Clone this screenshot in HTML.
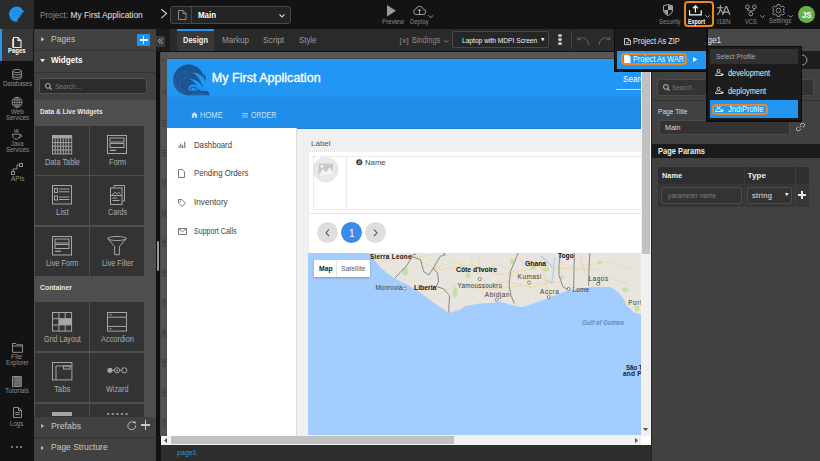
<!DOCTYPE html>
<html><head><meta charset="utf-8">
<style>
*{margin:0;padding:0;box-sizing:border-box}
html,body{width:820px;height:461px;overflow:hidden;background:#131313;font-family:"Liberation Sans",sans-serif}
.a{position:absolute}
.t{position:absolute;white-space:nowrap;line-height:1}
svg{position:absolute;overflow:visible}
.nv{font-size:6px;color:#8e8e8e;text-align:center;width:34px;left:0}

.tile{position:absolute;background:#333;width:54px;height:49px}
.ico{fill:none;stroke:#a6a6a6;stroke-width:1}
</style></head><body>
<!-- ============ TOP BAR ============ -->
<div class="a" style="left:0;top:0;width:820px;height:29px;background:#131313"></div>
<div class="a" style="left:0;top:0;width:34px;height:29px;background:#2b2b2b"></div>
<!-- logo -->
<svg style="left:0;top:0" width="34" height="28" viewBox="0 0 34 28"><path d="M24 12.2 A7.6 7.6 0 1 0 17.3 21.8 L17.8 18.4 L20.4 17.1 L19.6 15.8 L22.2 14.8 L21.2 12.9 Z" fill="#1e96f0"></path><path d="M11.5 13 C13.5 10.8 17.5 10.2 20.5 11.6 M12.5 16.2 C14 14.2 17 13.6 19.5 14.6" stroke="#1a78c8" stroke-width="0.6" fill="none"></path></svg>
<div class="t" style="font-size: 9px; color: rgb(138, 138, 138); left: 40px; top: 11px; transform: scaleX(0.925); transform-origin: left top;">Project: <span style="color:#e4e4e4">My First Application</span></div>
<svg style="left:161px;top:9px" width="6" height="10" viewBox="0 0 6 10"><path d="M0.3 0.3 L5.5 4.6 L0.3 9.1" stroke="#c8c8c8" stroke-width="1.2" fill="none"></path></svg>
<!-- page selector -->
<div class="a" style="left:170px;top:6px;width:121px;height:18px;border:1px solid #484848;border-radius:3px;background:#242424"></div>
<div class="a" style="left:191px;top:7px;width:1px;height:16px;background:#484848"></div>
<svg style="left:178px;top:10px" width="9" height="10" viewBox="0 0 9 10"><path d="M0.5 0.5 H5 L8 3.5 V9.5 H0.5 Z M5 0.5 V3.5 H8" stroke="#8e8e8e" stroke-width="1" fill="none"></path></svg>
<div class="t" style="font-size: 8.5px; font-weight: bold; color: rgb(255, 255, 255); left: 198px; top: 11px; transform: scaleX(0.9332); transform-origin: left top;">Main</div>
<svg style="left:279px;top:13.5px" width="6" height="4" viewBox="0 0 6 4"><path d="M0.4 0.4 L3 3 L5.6 0.4" stroke="#cfcfcf" stroke-width="1.1" fill="none"></path></svg>

<!-- preview / deploy -->
<svg style="left:387px;top:4.7px" width="9" height="12" viewBox="0 0 9 12"><path d="M0 0 L9 5.7 L0 11.4 Z" fill="#9a9a9a"></path></svg>
<div class="t" style="font-size: 6.5px; color: rgb(138, 138, 138); left: 381.7px; top: 19px; transform: scaleX(0.9522); transform-origin: left top;">Preview</div>
<svg style="left:413px;top:5px" width="13" height="10" viewBox="0 0 13 10"><path d="M3 9.5 H10 A2.6 2.6 0 0 0 10.3 4.3 A3.9 3.9 0 0 0 2.8 4 A2.8 2.8 0 0 0 3 9.5 Z M6.5 9.5 V4.3 M4.8 6 L6.5 4.3 L8.2 6" stroke="#9a9a9a" stroke-width="1" fill="none"></path></svg>
<svg style="left:428px;top:15px" width="6" height="3" viewBox="0 0 6 3"><path d="M0.3 0.3 L2.8 2.6 L5.3 0.3" stroke="#a0a0a0" stroke-width="0.9" fill="none"></path></svg>
<div class="t" style="font-size: 6.5px; color: rgb(138, 138, 138); left: 410px; top: 19px; transform: scaleX(0.9153); transform-origin: left top;">Deploy</div>

<!-- security -->
<svg style="left:663px;top:4.4px" width="10" height="12" viewBox="0 0 10 12">
  <path d="M5 0.5 L9.5 1.8 V6 C9.5 8.8 7.5 10.6 5 11.4 C2.5 10.6 0.5 8.8 0.5 6 V1.8 Z" fill="none" stroke="#a0a0a0" stroke-width="1"></path>
  <path d="M5 1 L9 2.2 V6 H5 Z" fill="#a0a0a0"></path><path d="M5 6 V10.9 C2.9 10.2 1 8.6 1 6 Z" fill="#a0a0a0"></path>
</svg>
<div class="t" style="font-size: 6.5px; color: rgb(138, 138, 138); left: 658.8px; top: 19px; transform: scaleX(0.9164); transform-origin: left top;">Security</div>
<!-- export -->
<div class="a" style="left:684.3px;top:1.1px;width:29.5px;height:25.6px;border:2px solid #f0861f;border-radius:4px"></div>
<svg style="left:689px;top:5px" width="13" height="11" viewBox="0 0 13 11">
  <path d="M0.6 5.2 V9.9 H12.2 V5.2" stroke="#fff" stroke-width="1.2" fill="none"></path>
  <path d="M6.4 7.6 V0.8 M3.9 3.2 L6.4 0.8 L8.9 3.2" stroke="#fff" stroke-width="1.2" fill="none"></path>
</svg>
<svg style="left:704.7px;top:15px" width="6" height="3" viewBox="0 0 6 3"><path d="M0.3 0.3 L2.5 2.3 L4.7 0.3" stroke="#bbb" stroke-width="0.9" fill="none"></path></svg>
<div class="t" style="font-size: 6.5px; color: rgb(255, 255, 255); font-weight: bold; left: 687.6px; top: 19px; transform: scaleX(0.8216); transform-origin: left top;">Export</div>
<!-- i18n -->
<svg style="left:716px;top:4px" width="15" height="12" viewBox="0 0 15 12"><path d="M1 3.7 H7.6 M4.4 1 V4 C4.2 7 3 9.2 1.2 10.6 M4.7 5.8 C5.3 7.3 6.2 8.3 7.4 9" stroke="#a8a8a8" stroke-width="1.1" fill="none"></path><path d="M6.6 11 L10 2.6 H10.6 L14 11 M7.8 8.2 H12.8" stroke="#a8a8a8" stroke-width="1.2" fill="none"></path></svg>
<div class="t" style="font-size: 6.5px; color: rgb(138, 138, 138); left: 717px; top: 19px; transform: scaleX(0.9844); transform-origin: left top;">I18N</div>
<!-- vcs -->
<svg style="left:745px;top:4px" width="12" height="13" viewBox="0 0 12 13">
  <circle cx="2.5" cy="2.9" r="1.9" fill="none" stroke="#a0a0a0" stroke-width="0.9"></circle>
  <circle cx="9.4" cy="2.9" r="1.9" fill="none" stroke="#a0a0a0" stroke-width="0.9"></circle>
  <circle cx="5.8" cy="9.9" r="1.9" fill="none" stroke="#a0a0a0" stroke-width="0.9"></circle>
  <path d="M2.5 4.8 V6 L5.8 7.2 M9.4 4.8 V6 L5.8 7.2 V8" stroke="#a0a0a0" stroke-width="0.9" fill="none"></path>
</svg>
<svg style="left:760px;top:14.6px" width="6" height="3" viewBox="0 0 6 3"><path d="M0.3 0.3 L2.5 2.6 L4.8 0.3" stroke="#a0a0a0" stroke-width="0.9" fill="none"></path></svg>
<div class="t" style="font-size: 6.5px; color: rgb(138, 138, 138); left: 745.3px; top: 19px; transform: scaleX(0.8837); transform-origin: left top;">VCS</div>
<!-- settings -->
<svg style="left:772px;top:3.7px" width="13" height="13" viewBox="-6.5 -6.5 13 13">
  <path d="M-1.2 -6 L1.2 -6 L1.6 -4.4 L3.1 -3.7 L4.5 -4.6 L6 -2.9 L5 -1.5 L5.4 0 L5 1.5 L6 2.9 L4.5 4.6 L3.1 3.7 L1.6 4.4 L1.2 6 L-1.2 6 L-1.6 4.4 L-3.1 3.7 L-4.5 4.6 L-6 2.9 L-5 1.5 L-5.4 0 L-5 -1.5 L-6 -2.9 L-4.5 -4.6 L-3.1 -3.7 L-1.6 -4.4 Z" fill="none" stroke="#9a9a9a" stroke-width="0.9" stroke-linejoin="round"></path>
  <circle cx="0" cy="0" r="2.3" fill="none" stroke="#9a9a9a" stroke-width="0.9"></circle>
</svg>
<svg style="left:787.5px;top:14.8px" width="6" height="3" viewBox="0 0 6 3"><path d="M0.3 0.3 L2.5 2.3 L4.8 0.3" stroke="#a0a0a0" stroke-width="0.9" fill="none"></path></svg>
<div class="t" style="font-size: 6.5px; color: rgb(138, 138, 138); left: 768.9px; top: 18px; transform: scaleX(0.954); transform-origin: left top;">Settings</div>
<div class="a" style="left:797.9px;top:6.4px;width:16.8px;height:16.8px;border-radius:50%;background:#6aaf4a"></div>
<div class="t" style="font-size: 8.5px; color: rgb(255, 255, 255); font-weight: bold; left: 801.9px; top: 11px; transform: scaleX(0.9206); transform-origin: left top;">JS</div>

<!-- ============ LEFT NAV ============ -->
<div class="a" style="left:0;top:29px;width:33.5px;height:432px;background:#131313"></div>
<div class="a" style="left:0;top:29px;width:33.4px;height:32px;background:#383838"></div>
<div class="a" style="left:0;top:29px;width:1.5px;height:32px;background:#2196f3"></div>
<svg style="left:12px;top:36.5px" width="10" height="11" viewBox="0 0 10 11"><path d="M1.5 0.5 H6 L9 3.5 V10.5 H1.5 Z M6 0.5 V3.5 H9" stroke="#e8e8e8" stroke-width="1.1" fill="none"></path><path d="M0.5 2 V10.5" stroke="#e8e8e8" stroke-width="0.8"></path></svg>
<div class="t" style="font-size: 6.5px; color: rgb(255, 255, 255); font-weight: bold; left: 8.3px; top: 48px; transform: scaleX(0.9146); transform-origin: left top;">Pages</div>

<svg style="left:12px;top:68.8px" width="10" height="11" viewBox="0 0 10 11"><ellipse cx="5" cy="2" rx="4.3" ry="1.6" fill="none" stroke="#9a9a9a" stroke-width="0.9"></ellipse><path d="M0.7 2 V9 C0.7 10.8 9.3 10.8 9.3 9 V2 M0.7 4.5 C0.7 6.3 9.3 6.3 9.3 4.5 M0.7 7 C0.7 8.8 9.3 8.8 9.3 7" fill="none" stroke="#9a9a9a" stroke-width="0.9"></path></svg>
<div class="t" style="font-size: 7px; color: rgb(142, 142, 142); left: 2.6px; top: 80px; transform: scaleX(0.8653); transform-origin: left top;">Databases</div>

<svg style="left:11px;top:97.3px" width="12" height="11" viewBox="0 0 12 11"><circle cx="6" cy="5.3" r="5" fill="none" stroke="#9a9a9a" stroke-width="0.9"></circle><path d="M6 0.3 V10.3 M1 5.3 H11 M1.8 2.8 H10.2 M1.8 7.8 H10.2 M6 0.3 C2.8 3 2.8 7.6 6 10.3 M6 0.3 C9.2 3 9.2 7.6 6 10.3" fill="none" stroke="#9a9a9a" stroke-width="0.7"></path></svg>
<div class="t" style="font-size: 7px; color: rgb(142, 142, 142); left: 11px; top: 108px; transform: scaleX(0.8935); transform-origin: left top;">Web</div>
<div class="t" style="font-size: 7px; color: rgb(142, 142, 142); left: 5.5px; top: 114px; transform: scaleX(0.859); transform-origin: left top;">Services</div>

<svg style="left:11px;top:128.5px" width="12" height="11" viewBox="0 0 12 11"><path d="M1.5 5.2 H9.2 C9.2 8.5 7.5 10.2 5.3 10.2 C3.1 10.2 1.5 8.5 1.5 5.2 Z M9.2 6 C11.4 6 11.4 8.3 8.6 8.3 M4 0.5 C3.3 1.5 4.7 2.3 4 3.5 M5.5 0.5 C4.8 1.5 6.2 2.3 5.5 3.5 M7 0.5 C6.3 1.5 7.7 2.3 7 3.5" fill="none" stroke="#9a9a9a" stroke-width="0.9"></path></svg>
<div class="t" style="font-size: 7px; color: rgb(142, 142, 142); left: 11px; top: 140px; transform: scaleX(0.8488); transform-origin: left top;">Java</div>
<div class="t" style="font-size: 7px; color: rgb(142, 142, 142); left: 5.8px; top: 146px; transform: scaleX(0.859); transform-origin: left top;">Services</div>

<svg style="left:11px;top:163px" width="12" height="12" viewBox="0 0 12 12"><rect x="0.5" y="8.5" width="3" height="3" fill="none" stroke="#9a9a9a" stroke-width="0.9"></rect><rect x="8.5" y="0.5" width="3" height="3" fill="none" stroke="#9a9a9a" stroke-width="0.9"></rect><path d="M2 8.5 V6 H6 V2 H8.5" fill="none" stroke="#9a9a9a" stroke-width="0.9"></path></svg>
<div class="t" style="font-size: 7px; color: rgb(142, 142, 142); left: 10.6px; top: 175px; transform: scaleX(0.9164); transform-origin: left top;">APIs</div>

<svg style="left:11.5px;top:342.8px" width="11" height="10" viewBox="0 0 11 10"><path d="M0.5 0.5 H4 L5 1.8 H10.5 V9.3 H0.5 Z M0.5 3 H10.5" fill="none" stroke="#9a9a9a" stroke-width="0.9"></path></svg>
<div class="t" style="font-size: 7px; color: rgb(142, 142, 142); left: 10.8px; top: 353px; transform: scaleX(0.9804); transform-origin: left top;">File</div>
<div class="t" style="font-size: 7px; color: rgb(142, 142, 142); left: 5.7px; top: 359px; transform: scaleX(0.8651); transform-origin: left top;">Explorer</div>
<svg style="left:12px;top:375.5px" width="10" height="11" viewBox="0 0 10 11"><path d="M0.5 0.5 H9.3 V10.5 H0.5 Z" fill="none" stroke="#9a9a9a" stroke-width="0.9"></path><path d="M2 0.5 V9.2 H9.3" fill="none" stroke="#9a9a9a" stroke-width="0.9"></path><rect x="2.5" y="1" width="6.5" height="7.8" fill="#6e6e6e"></rect></svg>
<div class="t" style="font-size: 7px; color: rgb(142, 142, 142); left: 5.1px; top: 387px; transform: scaleX(0.8972); transform-origin: left top;">Tutorials</div>
<svg style="left:12.5px;top:407px" width="9" height="11" viewBox="0 0 9 11"><path d="M0.5 0.5 H5.5 L8.5 3.5 V10.5 H0.5 Z M5.5 0.5 V3.5 H8.5 M2.2 5.5 H6.8 M2.2 7.5 H6.8" fill="none" stroke="#9a9a9a" stroke-width="0.9"></path></svg>
<div class="t" style="font-size: 7px; color: rgb(142, 142, 142); left: 10px; top: 420px; transform: scaleX(0.8731); transform-origin: left top;">Logs</div>
<div class="a" style="left:11px;top:445.5px;width:2.4px;height:2.4px;border-radius:50%;background:#9a9a9a"></div>
<div class="a" style="left:15.5px;top:445.5px;width:2.4px;height:2.4px;border-radius:50%;background:#9a9a9a"></div>
<div class="a" style="left:20px;top:445.5px;width:2.4px;height:2.4px;border-radius:50%;background:#9a9a9a"></div>


<!-- ============ LEFT PANEL ============ -->
<div class="a" style="left:33.5px;top:29px;width:122.5px;height:432px;background:#414141"></div>
<div class="a" style="left:33.5px;top:49.5px;width:122.5px;height:1px;background:#353535"></div>
<div class="a" style="left:33.5px;top:71.8px;width:122.5px;height:1px;background:#353535"></div>
<svg style="left:40.6px;top:37px" width="4" height="5" viewBox="0 0 4 5"><path d="M0 0 L3.5 2.2 L0 4.4 Z" fill="#b8b8b8"></path></svg>
<div class="t" style="font-size: 9.5px; color: rgb(196, 196, 196); left: 51.3px; top: 34px; transform: scaleX(0.8969); transform-origin: left top;">Pages</div>
<div class="a" style="left:137.2px;top:33.7px;width:12.8px;height:12.4px;background:#1e90f0"></div>
<div class="a" style="left:139.6px;top:39.4px;width:8px;height:1.2px;background:#fff"></div>
<div class="a" style="left:143px;top:36px;width:1.2px;height:8px;background:#fff"></div>
<svg style="left:40px;top:59.3px" width="5" height="4" viewBox="0 0 5 4"><path d="M0 0 L5 0 L2.5 3.2 Z" fill="#e8e8e8"></path></svg>
<div class="t" style="font-size: 9.5px; color: rgb(255, 255, 255); font-weight: bold; left: 51.3px; top: 55px; transform: scaleX(0.8535); transform-origin: left top;">Widgets</div>
<div class="a" style="left:39.4px;top:78.4px;width:107.6px;height:16px;background:#2c2c2c;border:1px solid #525252;border-radius:2px"></div>
<svg style="left:45px;top:83.2px" width="7" height="7" viewBox="0 0 7 7"><circle cx="2.9" cy="2.9" r="2.4" fill="none" stroke="#bdbdbd" stroke-width="1"></circle><path d="M4.7 4.7 L6.6 6.6" stroke="#bdbdbd" stroke-width="1.1"></path></svg>
<div class="t" style="font-size: 7.5px; color: rgb(122, 122, 122); left: 54.8px; top: 83px; transform: scaleX(0.8729); transform-origin: left top;">Search...</div>
<!-- widgets section -->
<div class="a" style="left:34px;top:99.5px;width:122px;height:317px;background:#4e4e4e"></div>
<div class="t" style="font-size: 8px; color: rgb(230, 230, 230); font-weight: bold; left: 40px; top: 108px; transform: scaleX(0.8152); transform-origin: left top;">Data &amp; Live Widgets</div>
<div class="tile" style="left:35px;top:126px"></div>
<div class="tile" style="left:90.3px;top:126px;width:53.7px"></div>
<div class="tile" style="left:35px;top:176.3px"></div>
<div class="tile" style="left:90.3px;top:176.3px;width:53.7px"></div>
<div class="tile" style="left:35px;top:227px;height:48.6px"></div>
<div class="tile" style="left:90.3px;top:227px;width:53.7px;height:48.6px"></div>
<div class="t" style="font-size: 8px; color: rgb(230, 230, 230); font-weight: bold; left: 40.4px; top: 284px; transform: scaleX(0.858); transform-origin: left top;">Container</div>
<div class="tile" style="left:35px;top:302.4px"></div>
<div class="tile" style="left:90.3px;top:302.4px;width:53.7px"></div>
<div class="tile" style="left:35px;top:353.1px"></div>
<div class="tile" style="left:90.3px;top:353.1px;width:53.7px"></div>
<div class="tile" style="left:35px;top:403.5px;height:14px"></div>
<div class="tile" style="left:90.3px;top:403.5px;width:53.7px;height:14px"></div>
<!-- tile icons -->
<svg style="left:51.8px;top:134.9px" width="20.2" height="19.4" viewBox="0 0 20.2 19.4">
  <rect x="0.5" y="0.5" width="19.2" height="18.4" class="ico"></rect>
  <rect x="0.5" y="0.5" width="19.2" height="3" fill="#a6a6a6"></rect>
  <path d="M3.2 3.5 V19 M5.9 3.5 V19 M8.6 3.5 V19 M11.3 3.5 V19 M14 3.5 V19 M16.7 3.5 V19 M0.5 7.6 H19.7 M0.5 11.3 H19.7 M0.5 15 H19.7" class="ico"></path>
</svg>
<svg style="left:107.1px;top:134.9px" width="20" height="19" viewBox="0 0 20 19">
  <rect x="0.5" y="0.5" width="19" height="18" class="ico"></rect>
  <rect x="3" y="3" width="14" height="4" class="ico"></rect><rect x="3" y="8.5" width="14" height="4" class="ico"></rect>
  <path d="M3 15.3 H9" stroke="#a6a6a6" stroke-width="1.3"></path>
</svg>
<div class="t" style="font-size: 9px; color: rgb(171, 171, 171); left: 44.9px; top: 158px; transform: scaleX(0.8145); transform-origin: left top;">Data Table</div>
<div class="t" style="font-size: 9px; color: rgb(171, 171, 171); left: 108.9px; top: 158px; transform: scaleX(0.8152); transform-origin: left top;">Form</div>
<svg style="left:51.8px;top:185.2px" width="20" height="19.5" viewBox="0 0 20 19.5">
  <rect x="0.5" y="0.5" width="19" height="18.5" class="ico"></rect>
  <rect x="2.5" y="3.5" width="3" height="4" class="ico"></rect><rect x="2.5" y="11" width="3" height="4" class="ico"></rect>
  <path d="M7 4 H17.5 M7 6.8 H17.5 M7 12 H17.5 M7 14.5 H17.5" class="ico"></path>
</svg>
<svg style="left:109.8px;top:184.9px" width="15" height="20" viewBox="0 0 15 20">
  <path d="M4 2.5 V0.5 H14.5 V16 H12" class="ico"></path>
  <rect x="0.5" y="3" width="11.5" height="16.5" class="ico"></rect>
  <path d="M2.2 10 L4.8 7.2 L6.8 9 L8.6 7.2 L10.5 9" class="ico"></path><path d="M0.5 10.5 H12" class="ico"></path>
  <path d="M2.5 13 H7 M2.5 15.5 H9.5" class="ico"></path>
</svg>
<div class="t" style="font-size: 9px; color: rgb(171, 171, 171); left: 55.9px; top: 208px; transform: scaleX(0.9076); transform-origin: left top;">List</div>
<div class="t" style="font-size: 9px; color: rgb(171, 171, 171); left: 107.8px; top: 208px; transform: scaleX(0.7961); transform-origin: left top;">Cards</div>
<svg style="left:51.8px;top:235.6px" width="20" height="19.5" viewBox="0 0 20 19.5">
  <rect x="0.5" y="0.5" width="19" height="18.5" class="ico"></rect>
  <rect x="3" y="3" width="14" height="4" class="ico"></rect><rect x="3" y="8.5" width="14" height="4" class="ico"></rect>
  <path d="M3 15.3 H9" stroke="#a6a6a6" stroke-width="1.3"></path>
</svg>
<svg style="left:107.1px;top:236px" width="20" height="19.2" viewBox="0 0 20 19.2">
  <ellipse cx="10" cy="2.5" rx="9.4" ry="2" class="ico"></ellipse>
  <path d="M0.6 2.5 L7.6 10.5 V18.7 H12.4 V10.5 L19.4 2.5" class="ico"></path>
</svg>
<div class="t" style="font-size: 9px; color: rgb(171, 171, 171); left: 46px; top: 259px; transform: scaleX(0.8102); transform-origin: left top;">Live Form</div>
<div class="t" style="font-size: 9px; color: rgb(171, 171, 171); left: 101.6px; top: 259px; transform: scaleX(0.8079); transform-origin: left top;">Live Filter</div>
<svg style="left:51.7px;top:311.6px" width="20.1" height="19.6" viewBox="0 0 20.1 19.6">
  <rect x="0.5" y="0.5" width="19.1" height="18.6" class="ico"></rect>
  <rect x="6.9" y="6.7" width="12.7" height="6.2" fill="#a6a6a6"></rect>
  <path d="M6.9 0.5 V19.1 M13.2 0.5 V6.7 M13.2 12.9 V19.1 M0.5 6.7 H6.9 M0.5 12.9 H6.9 M6.9 6.7 H19.6 M6.9 12.9 H19.6" class="ico"></path>
</svg>
<svg style="left:106.9px;top:311.6px" width="20" height="19.6" viewBox="0 0 20 19.6">
  <rect x="0.5" y="0.5" width="19" height="18.6" class="ico"></rect>
  <path d="M0.5 5.2 H19.5 M0.5 14.4 H19.5" class="ico"></path>
  <path d="M2.5 2.8 H4.5 M2.5 16.8 H4.5" stroke="#a6a6a6" stroke-width="1"></path>
</svg>
<div class="t" style="font-size: 9px; color: rgb(171, 171, 171); left: 43.9px; top: 335px; transform: scaleX(0.7913); transform-origin: left top;">Grid Layout</div>
<div class="t" style="font-size: 9px; color: rgb(171, 171, 171); left: 100.8px; top: 335px; transform: scaleX(0.8224); transform-origin: left top;">Accordion</div>
<svg style="left:51.7px;top:362.3px" width="20.4" height="18.4" viewBox="0 0 20.4 18.4">
  <rect x="0.5" y="0.5" width="19.4" height="17.4" class="ico"></rect>
  <path d="M4 17.9 V4 H19.9" class="ico"></path>
  <rect x="11.5" y="4" width="6.5" height="3" class="ico"></rect>
</svg>
<svg style="left:106.5px;top:367px" width="21" height="7" viewBox="0 0 21 7">
  <circle cx="3" cy="3.3" r="2.6" fill="#a6a6a6"></circle>
  <circle cx="10" cy="3.3" r="2.6" class="ico"></circle><circle cx="10" cy="3.3" r="0.9" fill="#a6a6a6"></circle>
  <circle cx="17.3" cy="3.3" r="2.6" class="ico"></circle>
  <path d="M5.6 3.3 H7.4 M12.6 3.3 H14.7" class="ico"></path>
</svg>
<div class="t" style="font-size: 9px; color: rgb(171, 171, 171); left: 54px; top: 385px; transform: scaleX(0.8582); transform-origin: left top;">Tabs</div>
<div class="t" style="font-size: 9px; color: rgb(171, 171, 171); left: 106.2px; top: 385px; transform: scaleX(0.8038); transform-origin: left top;">Wizard</div>
<div class="a" style="left:51.9px;top:412.2px;width:19.9px;height:3.4px;background:#a6a6a6"></div>
<svg style="left:106.8px;top:413px" width="21" height="2" viewBox="0 0 21 2"><path d="M0 1 H21" stroke="#a6a6a6" stroke-width="1.4" stroke-dasharray="2.4 2.2"></path></svg>
<!-- prefabs / page structure -->
<div class="a" style="left:33.5px;top:416.8px;width:122.5px;height:44.2px;background:#414141"></div>
<div class="a" style="left:33.5px;top:436.6px;width:122.5px;height:1px;background:#333"></div>
<svg style="left:40.6px;top:424.3px" width="4" height="5" viewBox="0 0 4 5"><path d="M0 0 L3.2 2 L0 4 Z" fill="#b8b8b8"></path></svg>
<div class="t" style="font-size: 9.5px; color: rgb(200, 200, 200); left: 51.3px; top: 421px; transform: scaleX(0.9209); transform-origin: left top;">Prefabs</div>
<svg style="left:127px;top:420.6px" width="10" height="10" viewBox="0 0 10 10"><path d="M8.6 4.6 A3.9 3.9 0 1 1 7.3 1.9" fill="none" stroke="#bdbdbd" stroke-width="1"></path><path d="M6 0.2 L8.8 0.6 L8.4 3.4 Z" fill="#bdbdbd"></path></svg>
<div class="a" style="left:141px;top:424.3px;width:9.4px;height:1.4px;background:#c8c8c8"></div>
<div class="a" style="left:145px;top:420.3px;width:1.4px;height:9.4px;background:#c8c8c8"></div>
<svg style="left:40.6px;top:445.7px" width="4" height="5" viewBox="0 0 4 5"><path d="M0 0 L3.2 2 L0 4 Z" fill="#b8b8b8"></path></svg>
<div class="t" style="font-size: 9.5px; color: rgb(200, 200, 200); left: 51.3px; top: 442px; transform: scaleX(0.894); transform-origin: left top;">Page Structure</div>
<!-- scroll strip -->
<div class="a" style="left:156px;top:29px;width:4px;height:432px;background:#0f0f0f"></div>
<div class="a" style="left:156.9px;top:240.8px;width:1.9px;height:30.2px;background:#9a9a9a;border-radius:1px"></div>


<!-- ============ CENTER ============ -->
<div class="a" style="left:160px;top:29px;width:491px;height:21.5px;background:#2a2a2a"></div>
<div class="a" style="left:156px;top:29px;width:14px;height:21.5px;background:#1c1c1c"></div>
<div class="a" style="left:176.5px;top:29px;width:37px;height:21.5px;background:#383838"></div>
<div class="a" style="left:176.5px;top:29px;width:37px;height:2px;background:#2196f3"></div>
<div class="t" style="font-size: 8.5px; color: rgb(240, 240, 240); font-weight: bold; left: 182.8px; top: 36px; transform: scaleX(0.8813); transform-origin: left top;">Design</div>
<div class="t" style="font-size: 8.5px; color: rgb(156, 156, 156); left: 222.1px; top: 36px; transform: scaleX(0.9484); transform-origin: left top;">Markup</div>
<div class="t" style="font-size: 8.5px; color: rgb(156, 156, 156); left: 263.3px; top: 36px; transform: scaleX(0.9745); transform-origin: left top;">Script</div>
<div class="t" style="font-size: 8.5px; color: rgb(156, 156, 156); left: 298.6px; top: 36px; transform: scaleX(0.9246); transform-origin: left top;">Style</div>
<div class="t" style="font-size: 8px; color: rgb(138, 138, 138); left: 399.6px; top: 37px; letter-spacing: 0.393px;">[x]</div>
<div class="t" style="font-size: 8.5px; color: rgb(138, 138, 138); left: 411.8px; top: 36px; transform: scaleX(0.8642); transform-origin: left top;">Bindings</div>
<svg style="left:443.5px;top:40px" width="5" height="3" viewBox="0 0 5 3"><path d="M0.3 0.3 L2.3 2.3 L4.3 0.3" stroke="#9a9a9a" stroke-width="0.9" fill="none"></path></svg>
<div class="a" style="left:452.2px;top:31.2px;width:96.4px;height:17.2px;border:1px solid #494949;border-radius:2px;background:#262626"></div>
<div class="t" style="font-size: 8px; color: rgb(242, 242, 242); left: 461.5px; top: 37px; transform: scaleX(0.8294); transform-origin: left top;">Laptop with MDPI Screen</div>
<svg style="left:541px;top:38px" width="4" height="4" viewBox="0 0 4 4"><path d="M0 0 H3.6 L1.8 3.4 Z" fill="#eee"></path></svg>
<div class="a" style="left:558.4px;top:33.9px;width:3.4px;height:3.4px;border-radius:50%;background:#c4c4c4"></div>
<div class="a" style="left:558.4px;top:37.8px;width:3.4px;height:3.4px;border-radius:50%;background:#c4c4c4"></div>
<div class="a" style="left:558.4px;top:41.8px;width:3.4px;height:3.4px;border-radius:50%;background:#c4c4c4"></div>
<div class="a" style="left:571.2px;top:31.2px;width:0.9px;height:17.6px;background:#454545"></div>
<svg style="left:577px;top:36px" width="13" height="10" viewBox="0 0 13 10"><path d="M11.6 9 C11.6 4.5 8.5 1.8 5 1.8 C3.6 1.8 2.4 2.3 1.3 3.2 M1 0.6 V3.6 H4" stroke="#5a5a5a" stroke-width="1.1" fill="none"></path></svg>
<svg style="left:597.8px;top:36px" width="13" height="10" viewBox="0 0 13 10"><path d="M1.2 9 C1.2 4.5 4.3 1.8 7.8 1.8 C9.2 1.8 10.4 2.3 11.5 3.2 M11.8 0.6 V3.6 H8.8" stroke="#5a5a5a" stroke-width="1.1" fill="none"></path></svg>
<div class="a" style="left:155.9px;top:35.6px;width:8.8px;height:11.4px;background:#3a3a3a"></div>
<svg style="left:157.8px;top:38.3px" width="5" height="6" viewBox="0 0 5 6"><path d="M2.3 0.3 L0.4 3 L2.3 5.7 M4.6 0.3 L2.7 3 L4.6 5.7" stroke="#b0b0b0" stroke-width="0.9" fill="none"></path></svg>
<!-- canvas surround -->
<div class="a" style="left:160px;top:50.5px;width:491px;height:1.5px;background:#111"></div>
<div class="a" style="left:160px;top:52px;width:481px;height:384px;background:#575757"></div>
<div class="a" style="left:159.8px;top:52px;width:7.4px;height:384px;background:#535353;border-left:1px solid #494949;border-right:1px solid #4d4d4d"></div>
<div class="a" style="left:167px;top:58.3px;width:474px;height:1px;background:#4a4643"></div>
<!-- ruler labels (vertical) -->
<div class="t" style="left:165.8px;top:59px;font-size:5px;color:#303030;transform:rotate(90deg);transform-origin:left top">0</div>
<div class="t" style="left:165.8px;top:89px;font-size:5px;color:#303030;transform:rotate(90deg);transform-origin:left top">50</div>
<div class="t" style="left:165.8px;top:119px;font-size:5px;color:#303030;transform:rotate(90deg);transform-origin:left top">100</div>
<div class="t" style="left:165.8px;top:149px;font-size:5px;color:#303030;transform:rotate(90deg);transform-origin:left top">150</div>
<div class="t" style="left:165.8px;top:179px;font-size:5px;color:#303030;transform:rotate(90deg);transform-origin:left top">200</div>
<div class="t" style="left:165.8px;top:209px;font-size:5px;color:#303030;transform:rotate(90deg);transform-origin:left top">250</div>
<div class="t" style="left:165.8px;top:239px;font-size:5px;color:#303030;transform:rotate(90deg);transform-origin:left top">300</div>
<div class="t" style="left:165.8px;top:269px;font-size:5px;color:#303030;transform:rotate(90deg);transform-origin:left top">350</div>
<div class="t" style="left:165.8px;top:299px;font-size:5px;color:#303030;transform:rotate(90deg);transform-origin:left top">400</div>
<div class="t" style="left:165.8px;top:329px;font-size:5px;color:#303030;transform:rotate(90deg);transform-origin:left top">450</div>
<div class="t" style="left:165.8px;top:359px;font-size:5px;color:#303030;transform:rotate(90deg);transform-origin:left top">500</div>
<div class="t" style="left:165.8px;top:389px;font-size:5px;color:#303030;transform:rotate(90deg);transform-origin:left top">550</div>
<div class="t" style="left:165.8px;top:419px;font-size:5px;color:#303030;transform:rotate(90deg);transform-origin:left top">600</div>
<!-- page -->
<div class="a" style="left:167px;top:59.2px;width:474px;height:376.4px;background:#eef0f2;overflow:hidden">
</div>
<div class="a" style="left:167px;top:59.2px;width:474px;height:38.5px;background:#2196f3"></div>
<div class="a" style="left:167px;top:95px;width:474px;height:33.6px;background:linear-gradient(#2196f3 0px,#1f8de7 5px,#1f8de7 32.6px,#1a80d6 33.6px)"></div>
<svg style="left:170.5px;top:63.5px" width="40" height="32" viewBox="0 0 40 32">
  <circle cx="17.6" cy="15.9" r="15.4" fill="#1b5593"></circle>
  <path d="M33 9.5 C34.6 12 35 14.5 34.4 17 L30 17 Z" fill="#1b5593"></path>
  <path d="M17 31.3 H38.7 C38.4 28.6 37.2 26.8 35 26.8 H17 Z" fill="#1b5593"></path>
  <path d="M21.5 8.6 C27.5 8.8 32.5 12.2 34.6 17.2 L36 17.2 L36 23 L31.2 21.6 C29.5 15.6 26 11.2 21.5 8.6 Z" fill="#2196f3"></path>
  <path d="M18.2 14.8 C24 15 28.6 18 30.6 21.8 L32 26 L27.4 25.6 C25.8 20.6 22.8 17 18.2 14.8 Z" fill="#2196f3"></path>
  <path d="M17.4 25.6 C17.2 22.6 19.4 20.4 22.2 20.4 C24.8 20.4 26.6 22.4 26.8 25 L25.2 26.8 H18.6 Z" fill="#2196f3"></path>
  <path d="M19.2 26.8 C19.2 24.4 20.6 23.2 22.4 23.2 C23.8 23.2 24.8 24.1 25 25.4" stroke="#1b5593" stroke-width="1.1" fill="none"></path>
  <path d="M14.8 30.6 C8.4 29.2 4.4 23.8 4.4 17.6 C4.4 11.4 9.4 7.4 16.4 8 M15.6 29.6 C10.8 28.2 8.4 24.4 8.4 20.4 C8.4 16 12 13 17.4 13.8" stroke="#2a73ba" stroke-width="0.55" fill="none"></path>
  <path d="M21 29.2 H34 M24 30.4 H36" stroke="#2a6fb5" stroke-width="0.5" fill="none"></path>
</svg>
<div class="t" style="font-size: 12.5px; color: rgb(255, 255, 255); -webkit-text-stroke: 0.35px rgb(255, 255, 255); left: 211.8px; top: 72px; letter-spacing: 0.022px;">My First Application</div>
<svg style="left:190.5px;top:111.6px" width="7" height="6" viewBox="0 0 7 6"><path d="M3.5 0 L7 3 H6 V6 H4.2 V4.2 H2.8 V6 H1 V3 H0 Z" fill="#c4def8"></path></svg>
<div class="t" style="font-size: 8.5px; color: rgb(201, 225, 250); left: 200px; top: 111px; transform: scaleX(0.8894); transform-origin: left top;">HOME</div>
<svg style="left:242px;top:112.6px" width="6" height="5" viewBox="0 0 6 5"><path d="M0 0.5 H6 M0 2.3 H6 M0 4.1 H6" stroke="#a9cff5" stroke-width="0.8"></path></svg>
<div class="t" style="font-size: 8.5px; color: rgb(201, 225, 250); left: 251px; top: 111px; transform: scaleX(0.8266); transform-origin: left top;">ORDER</div>
<div class="a" style="left:600px;top:59.2px;width:41px;height:38px;overflow:hidden"><div class="t" style="font-size: 8.5px; color: rgb(255, 255, 255); left: 23.1px; top: 16px; transform: scaleX(0.9533); transform-origin: left top;">Search</div></div>
<div class="a" style="left:616px;top:88.8px;width:25px;height:0.9px;background:#bcdcfa"></div>
<!-- left nav -->
<div class="a" style="left:167px;top:128.4px;width:128.5px;height:307.2px;background:#fff"></div>
<div class="a" style="left:295.5px;top:128.4px;width:1px;height:307.2px;background:#d9dcdf"></div>
<svg style="left:178px;top:141px" width="8" height="7" viewBox="0 0 8 7"><path d="M0.3 6.6 H7.8" stroke="#8a8a8a" stroke-width="0.7"></path><path d="M1 6.3 V4.6 M2.8 6.3 V2.6 M4.6 6.3 V4 M6.8 6.3 V0.8" stroke="#5e5e5e" stroke-width="1" fill="none"></path></svg>
<div class="t" style="font-size: 9px; color: rgb(66, 66, 66); left: 193.6px; top: 141px; transform: scaleX(0.8635); transform-origin: left top;">Dashboard</div>
<svg style="left:178.3px;top:169.3px" width="7" height="9" viewBox="0 0 7 9"><path d="M0.5 0.5 H4.3 L6.5 2.7 V8.5 H0.5 Z" stroke="#6a6a6a" stroke-width="0.9" fill="none"></path></svg>
<div class="t" style="font-size: 9px; color: rgb(66, 66, 66); left: 193.6px; top: 169px; transform: scaleX(0.8632); transform-origin: left top;">Pending Orders</div>
<svg style="left:178px;top:198.5px" width="8" height="8" viewBox="0 0 8 8"><path d="M0.5 0.5 H3.8 L7.5 4.2 L4.2 7.5 L0.5 3.8 Z" stroke="#6a6a6a" stroke-width="0.9" fill="none"></path><circle cx="2.3" cy="2.3" r="0.7" fill="#6a6a6a"></circle></svg>
<div class="t" style="font-size: 9px; color: rgb(66, 66, 66); left: 193.6px; top: 198px; transform: scaleX(0.9106); transform-origin: left top;">Inventory</div>
<svg style="left:177.5px;top:228px" width="9" height="7" viewBox="0 0 9 7"><path d="M0.5 0.5 H8.5 V6.5 H0.5 Z M0.5 0.8 L4.5 3.8 L8.5 0.8" stroke="#6a6a6a" stroke-width="0.9" fill="none"></path></svg>
<div class="t" style="font-size: 9px; color: rgb(66, 66, 66); left: 193.6px; top: 227px; transform: scaleX(0.787); transform-origin: left top;">Support Calls</div>
<!-- content -->
<div class="t" style="font-size: 8px; color: rgb(85, 85, 85); left: 311.4px; top: 140px; transform: scaleX(0.9981); transform-origin: left top;">Label</div>
<div class="a" style="left:308.3px;top:151.2px;width:332.7px;height:102.2px;background:#fff;border:1px dotted #dcdcdc;border-right:none;border-bottom:none"></div>
<div class="a" style="left:312.5px;top:155.5px;width:328.5px;height:54.2px;border:1px dotted #d6d6d6;border-right:none"></div>
<div class="a" style="left:345.8px;top:155.5px;width:0;height:54.2px;border-left:1px dotted #d6d6d6"></div>
<div class="a" style="left:308.5px;top:213.2px;width:332.5px;height:1px;background:#e6e6e6"></div>
<svg style="left:313.3px;top:156.6px" width="26" height="26" viewBox="0 0 26 26">
  <circle cx="12.7" cy="12.7" r="12.2" fill="#e9e9e9" stroke="#dcdcdc" stroke-width="0.8"></circle>
  <path d="M5.5 6.5 H20 V17 L5.5 19.5 Z" fill="#c9c9c9"></path>
  <path d="M5.5 19.5 L10 12 L13 15.5 L16.5 10.5 L20 15 V17 Z" fill="#f4f4f4"></path>
  <circle cx="9" cy="9.5" r="1.4" fill="#f4f4f4"></circle>
</svg>
<svg style="left:356.3px;top:159.3px" width="7" height="7" viewBox="0 0 7 7"><circle cx="3.3" cy="3.3" r="3" fill="#333"></circle><path d="M1.7 5 L5 1.6 M2.2 3 L3.5 1.8 M3.4 5 L5 3.5" stroke="#fff" stroke-width="0.8"></path></svg>
<div class="t" style="font-size: 8px; color: rgb(68, 68, 68); left: 364.7px; top: 159px; transform: scaleX(0.967); transform-origin: left top;">Name</div>
<div class="a" style="left:317px;top:222.4px;width:20.8px;height:20.8px;border-radius:50%;background:#dedede"></div>
<svg style="left:324.5px;top:229.2px" width="5" height="8" viewBox="0 0 5 8"><path d="M4 0.5 L1 3.8 L4 7.1" stroke="#555" stroke-width="1.1" fill="none"></path></svg>
<div class="a" style="left:341px;top:222.4px;width:20.8px;height:20.8px;border-radius:50%;background:#3b8beb"></div>
<div class="t" style="font-size: 10px; color: rgb(255, 255, 255); left: 349px; top: 229px; letter-spacing: 0.037px;">1</div>
<div class="a" style="left:365px;top:222.4px;width:20.8px;height:20.8px;border-radius:50%;background:#dedede"></div>
<svg style="left:373px;top:229.2px" width="5" height="8" viewBox="0 0 5 8"><path d="M1 0.5 L4 3.8 L1 7.1" stroke="#555" stroke-width="1.1" fill="none"></path></svg>
<div class="a" style="left:308px;top:253.4px;width:333px;height:182px;overflow:hidden">
<svg style="left:0;top:0" width="333" height="182" viewBox="0 0 333 182">
<rect x="0" y="0" width="333" height="182" fill="#a3ccff"></rect>
<polygon points="61.5,0.0 64.4,3.1 67.5,8.6 72.5,14.6 79.0,20.1 87.0,25.6 100.7,32.6 111.8,39.3 120.0,45.6 128.0,51.2 140.8,60.1 152.7,56.4 157.6,53.1 171.5,50.4 183.2,50.0 192.0,48.8 202.0,51.6 214.0,54.3 227.0,50.1 239.6,45.4 250.0,41.6 260.0,37.6 272.0,35.6 285.6,33.9 301.0,33.9 307.0,36.6 311.3,40.6 316.0,46.6 319.0,53.1 326.6,60.1 333.0,61.3 333.0,0.0" fill="#e7e5dd"></polygon>
<ellipse cx="97.0" cy="18.6" rx="3" ry="4" fill="#c5dfa6"></ellipse>
<ellipse cx="160.0" cy="22.6" rx="2.5" ry="3" fill="#c5dfa6"></ellipse>
<ellipse cx="147.0" cy="39.6" rx="2.5" ry="5" fill="#c5dfa6"></ellipse>
<ellipse cx="225.0" cy="14.6" rx="3" ry="2.5" fill="#c5dfa6"></ellipse>
<ellipse cx="204.0" cy="8.6" rx="2" ry="3" fill="#c5dfa6"></ellipse>
<ellipse cx="292.0" cy="9.6" rx="2.5" ry="2" fill="#c5dfa6"></ellipse>
<ellipse cx="317.0" cy="36.6" rx="3" ry="2" fill="#c5dfa6"></ellipse>
<ellipse cx="329.0" cy="55.6" rx="2.5" ry="3" fill="#c5dfa6"></ellipse>
<ellipse cx="254.0" cy="24.6" rx="2" ry="2" fill="#c5dfa6"></ellipse>
<path d="M232.4 2.6 L242.6 11.8 L245.6 16.9 L244.6 25.1 L243.6 30.6 M246.7 4.6 L245.6 14.6 M237.5 27.1 L243.6 30.2" stroke="#a9cff7" stroke-width="1.3" fill="none" stroke-linejoin="round"></path>
<path d="M112.0 8.6 L132.0 16.6 L162.0 11.6 L192.0 21.6 L232.0 14.6 L292.0 16.6" stroke="#efd39c" stroke-width="0.7" fill="none"></path>
<path d="M122.0 46.6 L152.0 29.6 L182.0 36.6 L222.0 31.6 L252.0 28.6" stroke="#efd39c" stroke-width="0.7" fill="none"></path>
<path d="M72.0 8.6 L92.0 4.6 L122.0 2.6" stroke="#efd39c" stroke-width="0.7" fill="none"></path>
<path d="M162.0 4.6 L172.0 26.6 L177.0 46.6" stroke="#efd39c" stroke-width="0.7" fill="none"></path>
<path d="M232.0 4.6 L237.0 26.6 L240.0 43.6" stroke="#efd39c" stroke-width="0.7" fill="none"></path>
<ellipse cx="238" cy="16.599999999999994" rx="3" ry="2" fill="#c5dfa6"></ellipse>
<path d="M122.0 16.6 L147.0 8.6 L167.0 18.6 L192.0 11.6 L212.0 21.6" stroke="#efd39c" stroke-width="0.7" fill="none"></path>
<path d="M162.0 36.6 L182.0 31.6 L202.0 28.6 L222.0 34.6 L237.0 31.6" stroke="#efd39c" stroke-width="0.7" fill="none"></path>
<path d="M252.0 8.6 L267.0 16.6 L282.0 11.6 L302.0 8.6 L327.0 16.6" stroke="#efd39c" stroke-width="0.7" fill="none"></path>
<path d="M292.0 21.6 L307.0 26.6 L322.0 31.6" stroke="#efd39c" stroke-width="0.7" fill="none"></path>
<path d="M212.0 4.6 L217.0 16.6 L222.0 36.6" stroke="#efd39c" stroke-width="0.7" fill="none"></path>
<path d="M272.0 1.6 L277.0 21.6" stroke="#efd39c" stroke-width="0.7" fill="none"></path>
<path d="M172.0 1.6 L170.0 16.6 L182.0 38.6" stroke="#efd39c" stroke-width="0.7" fill="none"></path>
<path d="M87.0 25.1 L92.0 19.6 L98.0 13.6 L101.0 8.6 L103.2 6.0 L103.2 3.4 L106.0 1.1 L108.0 1.6" stroke="#7d7d7d" stroke-width="0.9" fill="none" stroke-linejoin="round"></path>
<path d="M103.2 3.4 L112.6 6.6 L114.0 12.6 L116.0 18.8 L121.0 21.9 L125.4 15.0 L129.7 20.6 L130.5 29.0 L128.0 33.3 L135.7 35.9 L141.6 42.6 L141.0 51.6 L140.8 59.8" stroke="#7d7d7d" stroke-width="0.9" fill="none" stroke-linejoin="round"></path>
<path d="M125.4 15.0 L129.0 8.6 L132.2 3.4 L137.4 1.6 L135.0 0.0" stroke="#7d7d7d" stroke-width="0.9" fill="none" stroke-linejoin="round"></path>
<path d="M210.1 0.0 L206.3 9.6 L202.4 18.5 L201.1 32.6 L203.0 42.6 L206.3 50.5" stroke="#7d7d7d" stroke-width="0.9" fill="none" stroke-linejoin="round"></path>
<path d="M252.4 0.0 L251.0 11.6 L251.0 22.3 L254.9 33.9 L260.0 36.4" stroke="#7d7d7d" stroke-width="0.9" fill="none" stroke-linejoin="round"></path>
<path d="M266.4 0.0 L266.0 16.6 L265.7 35.1" stroke="#7d7d7d" stroke-width="0.9" fill="none" stroke-linejoin="round"></path>
<path d="M281.8 0.0 L281.0 16.6 L280.5 32.6" stroke="#7d7d7d" stroke-width="0.9" fill="none" stroke-linejoin="round"></path>
<circle cx="171.7" cy="26.2" r="1.5" fill="#fff" stroke="#555" stroke-width="0.7"></circle>
<circle cx="188.8" cy="46.6" r="1.5" fill="#fff" stroke="#555" stroke-width="0.7"></circle>
<circle cx="221.1" cy="29.5" r="1.5" fill="#fff" stroke="#555" stroke-width="0.7"></circle>
<circle cx="240.8" cy="44.1" r="1.5" fill="#fff" stroke="#555" stroke-width="0.7"></circle>
<circle cx="260.6" cy="35.9" r="1.5" fill="#fff" stroke="#555" stroke-width="0.7"></circle>
<circle cx="290.3" cy="30.8" r="1.5" fill="#fff" stroke="#555" stroke-width="0.7"></circle>
<circle cx="96.7" cy="35.5" r="1.5" fill="#fff" stroke="#555" stroke-width="0.7"></circle>
</svg>
<div class="t" style="font-size: 6.3px; color: rgb(17, 17, 17); font-style: normal; font-weight: bold; left: 62px; top: 1px; letter-spacing: 0.304px;">Sierra Leone</div>
<div class="t" style="font-size: 7px; color: rgb(17, 17, 17); font-style: normal; font-weight: bold; left: 147.5px; top: 13px; transform: scaleX(0.9747); transform-origin: left top;">Côte d'Ivoire</div>
<div class="t" style="font-size: 6.3px; color: rgb(58, 58, 58); font-style: normal; left: 67.4px; top: 32px; letter-spacing: 0.143px;">Monrovia</div>
<div class="t" style="font-size: 7px; color: rgb(17, 17, 17); font-style: normal; font-weight: bold; left: 105.8px; top: 31px; transform: scaleX(0.9742); transform-origin: left top;">Liberia</div>
<div class="t" style="font-size: 6.3px; color: rgb(58, 58, 58); font-style: normal; left: 149.5px; top: 30px; letter-spacing: 0.269px;">Yamoussoukro</div>
<div class="t" style="font-size: 6.5px; color: rgb(58, 58, 58); font-style: normal; left: 176.8px; top: 39px; letter-spacing: 0.505px;">Abidjan</div>
<div class="t" style="font-size: 6.8px; color: rgb(17, 17, 17); font-style: normal; font-weight: bold; left: 216.5px; top: 8px; transform: scaleX(0.9947); transform-origin: left top;">Ghana</div>
<div class="t" style="font-size: 6.5px; color: rgb(58, 58, 58); font-style: normal; left: 209.6px; top: 21px; letter-spacing: 0.446px;">Kumasi</div>
<div class="t" style="font-size: 6.5px; color: rgb(58, 58, 58); font-style: normal; left: 232px; top: 36px; letter-spacing: 0.549px;">Accra</div>
<div class="t" style="font-size: 6.8px; color: rgb(17, 17, 17); font-style: normal; font-weight: bold; left: 249.8px; top: 0px; transform: scaleX(0.9773); transform-origin: left top;">Togo</div>
<div class="t" style="font-size: 6.5px; color: rgb(58, 58, 58); font-style: normal; left: 264.5px; top: 34px; letter-spacing: 0.085px;">Lome</div>
<div class="t" style="font-size: 6.5px; color: rgb(58, 58, 58); font-style: normal; left: 280.5px; top: 23px; letter-spacing: 0.5px;">Lagos</div>
<div class="t" style="font-size: 6.5px; color: rgb(58, 58, 58); font-style: normal; left: 320.2px; top: 47px; letter-spacing: 0.533px;">Port</div>
<div class="t" style="font-size: 6.5px; color: rgb(95, 139, 200); font-style: italic; font-weight: bold; left: 274px; top: 67px; transform: scaleX(0.9272); transform-origin: left top;">Gulf of Guinea</div>
<div class="t" style="font-size: 6.5px; color: rgb(34, 34, 34); font-style: normal; font-weight: bold; left: 318.4px; top: 112px; transform: scaleX(0.9332); transform-origin: left top;">São T</div>
<div class="t" style="font-size: 6.5px; color: rgb(34, 34, 34); font-style: normal; font-weight: bold; left: 315px; top: 118px; letter-spacing: 0.204px;">and P</div>
<div class="a" style="left:5.7px;top:6.5px;width:56.2px;height:17.2px;background:#fff;box-shadow:0 1px 2px rgba(0,0,0,.25)"></div>
<div class="a" style="left:27.7px;top:6.5px;width:1px;height:17.2px;background:#e6e6e6"></div>
<div class="t" style="font-size: 7px; color: rgb(34, 34, 34); font-weight: bold; left: 10.5px; top: 12px; transform: scaleX(0.9686); transform-origin: left top;">Map</div>
<div class="t" style="font-size: 7px; color: rgb(90, 90, 90); left: 33.3px; top: 12px; transform: scaleX(0.9781); transform-origin: left top;">Satellite</div>
</div>

<!-- scrollbars -->
<div class="a" style="left:641px;top:51.8px;width:9.5px;height:383.8px;background:#f1f1f1"></div>
<div class="a" style="left:642px;top:59px;width:7.5px;height:194.5px;background:#c1c1c1"></div>
<svg style="left:643.3px;top:427.5px" width="5" height="4" viewBox="0 0 5 4"><path d="M0 0 H5 L2.5 3 Z" fill="#505050"></path></svg>
<div class="a" style="left:160.5px;top:435.6px;width:490px;height:9.6px;background:#f1f1f1"></div>
<div class="a" style="left:170.8px;top:436px;width:283.2px;height:8px;background:#c1c1c1"></div>
<svg style="left:163.5px;top:438px" width="4" height="5" viewBox="0 0 4 5"><path d="M3 0 V5 L0 2.5 Z" fill="#505050"></path></svg>
<svg style="left:634.5px;top:438px" width="4" height="5" viewBox="0 0 4 5"><path d="M0 0 V5 L3 2.5 Z" fill="#505050"></path></svg>
<div class="a" style="left:641px;top:435.6px;width:9.5px;height:9.6px;background:#fff"></div>
<!-- page tab bar -->
<div class="a" style="left:156px;top:445.2px;width:495px;height:15.8px;background:#2d2d2d"></div>
<div class="a" style="left:156px;top:435.6px;width:4.5px;height:25.4px;background:#121212"></div>
<div class="t" style="font-size: 8px; color: rgb(47, 143, 230); left: 176.8px; top: 449px; transform: scaleX(0.8917); transform-origin: left top;">page1</div>


<!-- ============ RIGHT PANEL ============ -->
<div class="a" style="left:650.5px;top:29px;width:169.5px;height:432px;background:#414141"></div>
<div class="a" style="left:650.5px;top:29px;width:1px;height:432px;background:#262626"></div>
<div class="a" style="left:651.5px;top:29px;width:168.5px;height:21.9px;background:#474747"></div>
<div class="t" style="font-size: 9px; color: rgb(224, 224, 224); left: 696.5px; top: 36px; transform: scaleX(0.9304); transform-origin: left top;">Page1</div>
<div class="a" style="left:651.5px;top:50.9px;width:168.5px;height:18.4px;background:#1d1d1d"></div>
<svg style="left:796px;top:54px" width="12" height="12" viewBox="0 0 12 12"><circle cx="6" cy="6" r="5" fill="none" stroke="#9a9a9a" stroke-width="1"></circle></svg>
<div class="a" style="left:656.8px;top:78.5px;width:157.2px;height:17.2px;background:#333;border:1px solid #4b4b4b;border-radius:3px"></div>
<svg style="left:662.8px;top:83.7px" width="7" height="7" viewBox="0 0 7 7"><circle cx="2.9" cy="2.9" r="2.4" fill="none" stroke="#c0c0c0" stroke-width="1"></circle><path d="M4.7 4.7 L6.6 6.6" stroke="#c0c0c0" stroke-width="1.1"></path></svg>
<div class="t" style="font-size: 7.5px; color: rgb(119, 119, 119); left: 672.4px; top: 84px; transform: scaleX(0.8396); transform-origin: left top;">Search...</div>
<div class="a" style="left:651.5px;top:99.8px;width:168.5px;height:1px;background:#333"></div>
<div class="t" style="font-size: 8px; color: rgb(222, 222, 222); left: 658px; top: 108px; transform: scaleX(0.8275); transform-origin: left top;">Page Title</div>
<div class="a" style="left:658.9px;top:119.8px;width:131.1px;height:15.5px;background:#333;border:1px solid #4b4b4b;border-radius:2px"></div>
<div class="t" style="font-size: 8px; color: rgb(222, 222, 222); left: 664.5px; top: 124px; transform: scaleX(0.8902); transform-origin: left top;">Main</div>
<svg style="left:796px;top:123.4px" width="9" height="8" viewBox="0 0 9 8"><path d="M3.6 4.6 L5.4 2.8 M4.2 1.8 L5.5 0.7 C6.4 0 7.6 0.1 8.2 0.8 C8.8 1.5 8.8 2.6 8 3.3 L6.8 4.4 M4.8 6.1 L3.5 7.3 C2.6 8 1.4 7.9 0.8 7.2 C0.2 6.5 0.2 5.4 1 4.7 L2.2 3.6" fill="none" stroke="#c8c8c8" stroke-width="1"></path></svg>
<div class="a" style="left:651.5px;top:143.7px;width:168.5px;height:14.7px;background:#1b1b1b"></div>
<div class="t" style="font-size: 8.5px; color: rgb(237, 237, 237); font-weight: bold; left: 658px; top: 147px; transform: scaleX(0.8797); transform-origin: left top;">Page Params</div>
<div class="a" style="left:658px;top:166.7px;width:150.6px;height:40px;background:#363636"></div>
<div class="a" style="left:658px;top:166.7px;width:150.6px;height:16.9px;background:#2f2f2f"></div>
<div class="a" style="left:744.3px;top:166.7px;width:1px;height:40px;background:#3a3a3a"></div>
<div class="a" style="left:795.4px;top:166.7px;width:1px;height:40px;background:#3f3f3f"></div>
<div class="t" style="font-size: 8px; color: rgb(240, 240, 240); font-weight: bold; left: 661.8px; top: 172px; transform: scaleX(0.9194); transform-origin: left top;">Name</div>
<div class="t" style="font-size: 8px; color: rgb(240, 240, 240); font-weight: bold; left: 747.5px; top: 172px; letter-spacing: 0.154px;">Type</div>
<div class="a" style="left:661.3px;top:186.5px;width:80.3px;height:17.3px;background:#333;border:1px solid #4d4d4d;border-radius:3px"></div>
<div class="t" style="font-size: 7px; color: rgb(124, 124, 124); left: 667.5px; top: 192px; transform: scaleX(0.9358); transform-origin: left top;">parameter name</div>
<div class="a" style="left:746.9px;top:186.5px;width:45.6px;height:17.3px;background:#333;border:1px solid #4d4d4d;border-radius:3px"></div>
<div class="t" style="font-size: 7.5px; color: rgb(230, 230, 230); left: 752px; top: 192px; letter-spacing: 0.311px;">string</div>
<svg style="left:785px;top:193px" width="4" height="4" viewBox="0 0 4 4"><path d="M0 0 H3.6 L1.8 3.2 Z" fill="#eee"></path></svg>
<div class="a" style="left:797.5px;top:194.4px;width:8.8px;height:1.4px;background:#e8e8e8"></div>
<div class="a" style="left:801.2px;top:190.7px;width:1.4px;height:8.8px;background:#e8e8e8"></div>

<!-- ============ EXPORT MENU ============ -->
<div class="a" style="left:613.5px;top:28px;width:94px;height:43.8px;background:#100e0c"></div>
<div class="a" style="left:615px;top:29px;width:91px;height:40.5px;background:#1c1c1c"></div>
<svg style="left:623.6px;top:38px" width="7" height="7" viewBox="0 0 7 7"><path d="M0.5 0.5 H4.3 L6.5 2.7 V6.6 H0.5 Z M2 4.8 H5 M4.3 0.5 V2.7 H6.5" stroke="#ddd" stroke-width="0.9" fill="none"></path></svg>
<div class="t" style="font-size: 8.5px; color: rgb(232, 232, 232); left: 632.9px; top: 37px; transform: scaleX(0.8686); transform-origin: left top;">Project As ZIP</div>
<div class="a" style="left:616.7px;top:50.5px;width:89.3px;height:18px;background:#2196f3"></div>
<svg style="left:623.6px;top:55px" width="7" height="8" viewBox="0 0 7 8"><path d="M0 0 H4.5 L6.6 2.1 V7.9 H0 Z" fill="#fff"></path></svg>
<div class="t" style="font-size: 8.5px; color: rgb(255, 255, 255); left: 632.9px; top: 55px; transform: scaleX(0.8458); transform-origin: left top;">Project As WAR</div>
<div class="a" style="left:621.1px;top:53px;width:65.7px;height:12.4px;border:2px solid #f0861f;border-radius:4px"></div>
<svg style="left:692.6px;top:56.7px" width="5" height="5" viewBox="0 0 5 5"><path d="M0 0 L4.2 2.5 L0 5 Z" fill="#fff"></path></svg>
<!-- submenu -->
<div class="a" style="left:706.4px;top:45.5px;width:95.3px;height:76px;background:#0e0e0e"></div>
<div class="a" style="left:707.6px;top:46.6px;width:93px;height:73.8px;background:#1c1c1c"></div>
<div class="a" style="left:709.6px;top:49px;width:88.7px;height:15px;background:#313131"></div>
<div class="t" style="font-size: 7.5px; color: rgb(168, 168, 168); left: 715.6px; top: 53px; transform: scaleX(0.8939); transform-origin: left top;">Select Profile</div>
<svg style="left:715px;top:69.4px" width="9" height="7" viewBox="0 0 9 7"><circle cx="3.6" cy="1.8" r="1.5" fill="none" stroke="#ddd" stroke-width="0.9"></circle><path d="M0.5 6.5 C0.5 4.5 2 3.8 3.6 3.8 C5.2 3.8 6.5 4.5 6.6 6.5 Z" fill="none" stroke="#ddd" stroke-width="0.9"></path><circle cx="7.3" cy="5.6" r="1.2" fill="#ddd"></circle></svg>
<div class="t" style="font-size: 8.5px; color: rgb(236, 236, 236); left: 727.6px; top: 69px; transform: scaleX(0.8646); transform-origin: left top;">development</div>
<svg style="left:715px;top:87.4px" width="9" height="7" viewBox="0 0 9 7"><circle cx="3.6" cy="1.8" r="1.5" fill="none" stroke="#ddd" stroke-width="0.9"></circle><path d="M0.5 6.5 C0.5 4.5 2 3.8 3.6 3.8 C5.2 3.8 6.5 4.5 6.6 6.5 Z" fill="none" stroke="#ddd" stroke-width="0.9"></path><circle cx="7.3" cy="5.6" r="1.2" fill="#ddd"></circle></svg>
<div class="t" style="font-size: 8.5px; color: rgb(236, 236, 236); left: 727.6px; top: 87px; transform: scaleX(0.8664); transform-origin: left top;">deployment</div>
<div class="a" style="left:709.5px;top:100px;width:88.8px;height:18.1px;background:#2196f3"></div>
<svg style="left:715px;top:105.4px" width="9" height="7" viewBox="0 0 9 7"><circle cx="3.6" cy="1.8" r="1.5" fill="none" stroke="#fff" stroke-width="0.9"></circle><path d="M0.5 6.5 C0.5 4.5 2 3.8 3.6 3.8 C5.2 3.8 6.5 4.5 6.6 6.5 Z" fill="none" stroke="#fff" stroke-width="0.9"></path><circle cx="7.3" cy="5.6" r="1.2" fill="#fff"></circle></svg>
<div class="t" style="font-size: 8.5px; color: rgb(255, 255, 255); left: 727.5px; top: 105px; transform: scaleX(0.8915); transform-origin: left top;">JndiProfile</div>
<div class="a" style="left:711.7px;top:103.5px;width:56.3px;height:11.7px;border:2px solid #f0861f;border-radius:4px"></div>


</body></html>
